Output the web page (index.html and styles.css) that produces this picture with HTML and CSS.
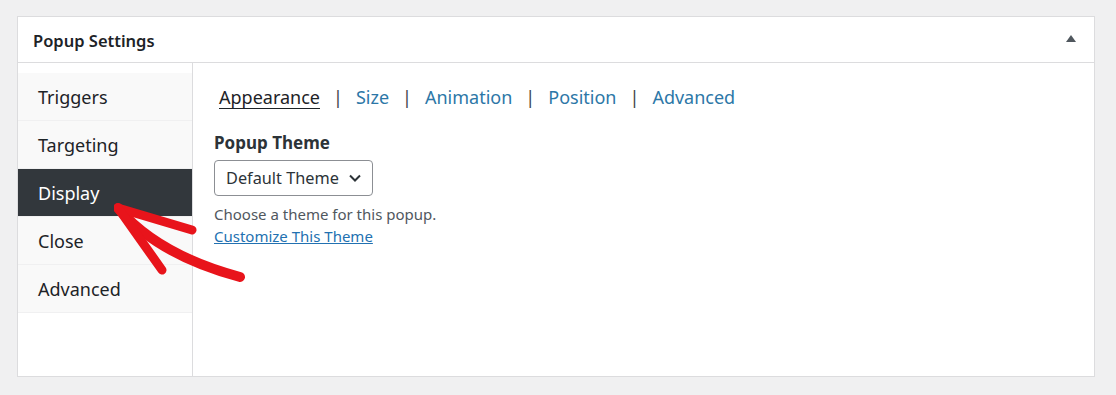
FILE: index.html
```html
<!DOCTYPE html>
<html lang="en">
<head>
  <meta charset="UTF-8">
  <title>Popup Settings</title>
  <link rel="stylesheet" href="styles.css">
</head>
<body>
  <!-- Settings metabox -->
  <div class="postbox">
    <div class="postbox-header">
      <h2 class="postbox-title">Popup Settings</h2>
      <span class="toggle-arrow"></span>
    </div>

    <div class="postbox-body">
      <!-- Left tabs -->
      <ul class="side-tabs">
        <li class="side-tab">Triggers</li>
        <li class="side-tab">Targeting</li>
        <li class="side-tab active">Display</li>
        <li class="side-tab">Close</li>
        <li class="side-tab">Advanced</li>
      </ul>

      <!-- Tab content -->
      <div class="tab-content">
        <nav class="sub-tabs">
          <a class="sub-tab current">Appearance</a>
          <span class="sep">|</span>
          <a class="sub-tab">Size</a>
          <span class="sep">|</span>
          <a class="sub-tab">Animation</a>
          <span class="sep">|</span>
          <a class="sub-tab">Position</a>
          <span class="sep">|</span>
          <a class="sub-tab">Advanced</a>
        </nav>

        <div class="field">
          <label class="field-label">Popup Theme</label>
          <div class="select-box">
            <span>Default Theme</span>
            <svg class="chevron" width="14" height="10" viewBox="0 0 14 10">
              <path d="M2 2.5 L7 7.5 L12 2.5" fill="none" stroke="#2c3338" stroke-width="2"/>
            </svg>
          </div>
          <p class="field-desc">Choose a theme for this popup.</p>
          <a class="field-link">Customize This Theme</a>
        </div>
      </div>
    </div>

    <!-- Red hand-drawn arrow pointing at Display -->
    <svg class="annotation" width="160" height="100" viewBox="0 0 160 100">
      <g fill="none" stroke="#e8141b" stroke-linecap="round" stroke-linejoin="round">
        <path d="M4 5 Q44 52 126 74" stroke-width="10"/>
        <path d="M4 5 L78 27" stroke-width="9"/>
        <path d="M4 5 L48 67" stroke-width="9"/>
      </g>
    </svg>
  </div>
</body>
</html>
```

FILE: styles.css
```css
body {
  margin: 0;
  padding: 16px 21px 17px 17px;
  background: #f0f0f1;
  font-family: "Noto Sans", "Open Sans", sans-serif;
  color: #1d2327;
}

/* Metabox */
.postbox {
  position: relative;
  background: #fff;
  border: 1px solid #dcdcde;
  height: 359px;
  display: flex;
  flex-direction: column;
}
.postbox-header {
  height: 45px;
  border-bottom: 1px solid #dcdcde;
  display: flex;
  align-items: center;
  justify-content: space-between;
  padding: 0 18px 0 15px;
}
.postbox-title {
  margin: 0;
  font-size: 16.5px;
  font-weight: 600;
  color: #1d2327;
  padding-top: 2px;
}
.toggle-arrow {
  width: 0;
  height: 0;
  border-left: 5px solid transparent;
  border-right: 5px solid transparent;
  border-bottom: 7px solid #50575e;
  margin-top: -2px;
}

.postbox-body {
  flex: 1;
  display: flex;
}

/* Left tabs */
.side-tabs {
  list-style: none;
  margin: 0;
  padding: 10px 0 0;
  width: 174px;
  border-right: 1px solid #dcdcde;
}
.side-tab {
  height: 47px;
  border-bottom: 1px solid #f0f0f1;
  background: #f9f9f9;
  padding-left: 20px;
  display: flex;
  align-items: center;
  font-size: 18px;
  color: #1d2327;
}
.side-tab.active {
  background: #32373c;
  color: #fff;
}

/* Content */
.tab-content {
  flex: 1;
  padding: 20px 20px 0 21px;
}
.sub-tabs {
  display: flex;
  align-items: center;
  gap: 13px;
  font-size: 18px;
  height: 28px;
  margin-left: 5px;
}
.sub-tab {
  color: #2c77a7;
}
.sub-tab.current {
  color: #1d2327;
  text-decoration: underline;
  text-underline-offset: 4px;
  text-decoration-thickness: 1px;
}
.sep {
  color: #3c434a;
}

.field {
  margin-top: 21px;
}
.field-label {
  display: block;
  font-size: 17px;
  font-weight: 700;
  color: #2c3338;
  line-height: 22px;
}
.select-box {
  margin-top: 6px;
  height: 34px;
  border: 1px solid #8c8f94;
  border-radius: 4px;
  display: flex;
  align-items: center;
  justify-content: space-between;
  padding: 0 10px 0 11px;
  width: 136px;
  font-size: 16.3px;
  color: #2c3338;
}
.chevron {
  display: block;
}
.field-desc {
  margin: 7px 0 0;
  font-size: 15px;
  color: #50575e;
  line-height: 22px;
}
.field-link {
  display: inline-block;
  font-size: 15px;
  color: #2271b1;
  text-decoration: underline;
  line-height: 22px;
}

/* Hand-drawn annotation over the tabs */
.annotation {
  position: absolute;
  left: 96px;
  top: 186px;
}
```
